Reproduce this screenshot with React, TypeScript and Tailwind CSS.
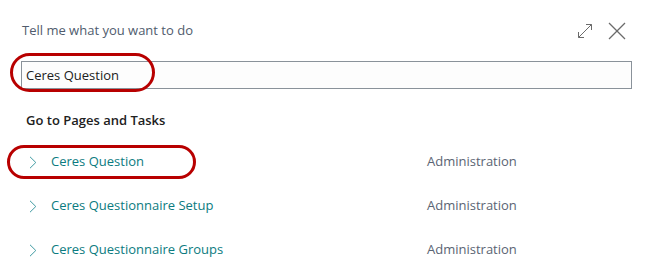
export default function App() {
  const rows = [
    { name: 'Ceres Question', area: 'Administration', marked: true },
    { name: 'Ceres Questionnaire Setup', area: 'Administration' },
    { name: 'Ceres Questionnaire Groups', area: 'Administration' },
  ];

  return (
    <div
      className="w-[653px] h-[279px] bg-white overflow-hidden"
      style={{ fontFamily: '"Open Sans", "Noto Sans", sans-serif' }}
    >
      {/* Header */}
      <div className="flex items-center justify-between pl-[22px] pr-[27px] pt-[21px] h-[40px]">
        <span className="text-[13px] text-[#505c6d]">Tell me what you want to do</span>
        <div className="flex items-center gap-[15px]">
          <svg width="16" height="16" viewBox="0 0 16 16" fill="none" stroke="#6b6b6b" strokeWidth="1">
            <path d="M1.5 14.5 L14.5 1.5" />
            <path d="M9 1.5 H14.5 V7" />
            <path d="M1.5 9 V14.5 H7" />
          </svg>
          <svg width="18" height="18" viewBox="0 0 18 18" fill="none" stroke="#6b6b6b" strokeWidth="1.3">
            <path d="M1 1 L17 17" />
            <path d="M17 1 L1 17" />
          </svg>
        </div>
      </div>

      {/* Search box */}
      <div className="relative ml-[21px] mt-[21px] w-[611px]">
        <div className="h-[28px] border border-[#8a929a] bg-[#fdfdfd] flex items-center pl-[4px] pt-[2px]">
          <span className="text-[13px] text-[#212121]">Ceres Question</span>
        </div>
        <div className="absolute left-[-11px] top-[-8px] w-[145px] h-[39px] rounded-full border-[3px] border-[#b80000]" />
      </div>

      {/* Results */}
      <div className="pl-[26px] mt-[22px]">
        <div className="text-[13px] font-semibold text-[#212121] h-[18px] leading-[18px]">Go to Pages and Tasks</div>
      </div>

      <div className="mt-[11px]">
        {rows.map((row) => (
          <div key={row.name} className="relative flex items-center h-[44px]">
            <div className="w-[51px] flex justify-end pr-[14px]">
              <svg width="8" height="13" viewBox="0 0 8 13" fill="none" stroke="#3f9aa1" strokeWidth="1">
                <path d="M1 0.8 L6.8 6.5 L1 12.2" />
              </svg>
            </div>
            <span className="w-[376px] text-[13px] text-[#0b7b80]">{row.name}</span>
            <span className="text-[13px] text-[#5a6473]">{row.area}</span>
            {row.marked && (
              <div className="absolute left-[7px] top-[5px] w-[189px] h-[34px] rounded-full border-[3px] border-[#b80000]" />
            )}
          </div>
        ))}
      </div>
    </div>
  );
}
